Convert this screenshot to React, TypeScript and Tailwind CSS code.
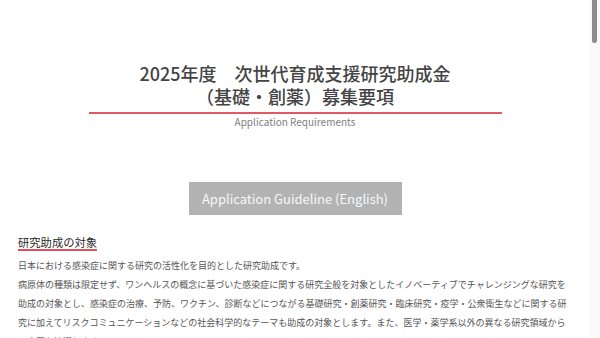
import React from "react";

const sections = [
  {
    title: "応募資格",
    body: [
      "日本国内の大学・研究機関に所属する若手研究者（応募時点で40歳未満）を対象とします。",
      "国籍は問いませんが、助成期間中は日本国内の研究機関に所属していることが必要です。",
    ],
  },
  {
    title: "助成金額・件数",
    body: ["1件あたり上限500万円、採択予定件数は基礎・創薬あわせて若干件とします。"],
  },
  {
    title: "応募期間",
    body: ["2025年4月1日（火）〜 2025年5月31日（土）必着"],
  },
];

function Heading({ children }: { children: React.ReactNode }) {
  return (
    <h2 className="w-fit border-b-2 border-[#e0505a] text-[11.3px] font-normal leading-[14px] text-[#2a2a2a]">
      {children}
    </h2>
  );
}

export default function App() {
  return (
    <div
      className="flex h-screen overflow-hidden bg-white"
      style={{ fontFamily: '"Noto Sans CJK JP", "Noto Sans", sans-serif' }}
    >
      <main className="min-w-0 flex-1 pt-[62px]">
        <div className="mx-auto w-[70%] border-b-2 border-[#e05a64] pb-[4px] text-center">
          <h1 className="text-[18px] font-medium leading-[23px] text-[#444]">
            2025年度　次世代育成支援研究助成金
            <br />
            （基礎・創薬）募集要項
          </h1>
        </div>
        <p className="mt-[1px] text-center text-[10px] leading-[14px] text-[#808080]">
          Application Requirements
        </p>

        <div className="mt-[53px] flex justify-center">
          <a className="flex h-[33px] w-[213px] items-center justify-center bg-[#b3b3b3] text-[13px] text-[#f7f7f7]">
            Application Guideline (English)
          </a>
        </div>

        <section className="mt-[20px] px-[18px]">
          <Heading>研究助成の対象</Heading>
          <div className="mt-[5px] text-[9px] leading-[19px] text-[#555]">
            <p>日本における感染症に関する研究の活性化を目的とした研究助成です。</p>
            <p>
              病原体の種類は限定せず、ワンヘルスの概念に基づいた感染症に関する研究全般を対象としたイノベーティブでチャレンジングな研究を助成の対象とし、感染症の治療、予防、ワクチン、診断などにつながる基礎研究・創薬研究・臨床研究・疫学・公衆衛生などに関する研究に加えてリスクコミュニケーションなどの社会科学的なテーマも助成の対象とします。また、医学・薬学系以外の異なる研究領域からの応募も歓迎します。
            </p>
          </div>
        </section>

        {sections.map((s) => (
          <section key={s.title} className="mt-[28px] px-[18px]">
            <Heading>{s.title}</Heading>
            <div className="mt-[5px] text-[9px] leading-[19px] text-[#555]">
              {s.body.map((line) => (
                <p key={line}>{line}</p>
              ))}
            </div>
          </section>
        ))}
      </main>

      {/* scrollbar */}
      <div className="w-[10px] shrink-0 bg-[#fafafa]">
        <div className="ml-[2px] h-[43px] w-[5px] rounded-b-[3px] bg-[#8c8c8c]" />
      </div>
    </div>
  );
}
